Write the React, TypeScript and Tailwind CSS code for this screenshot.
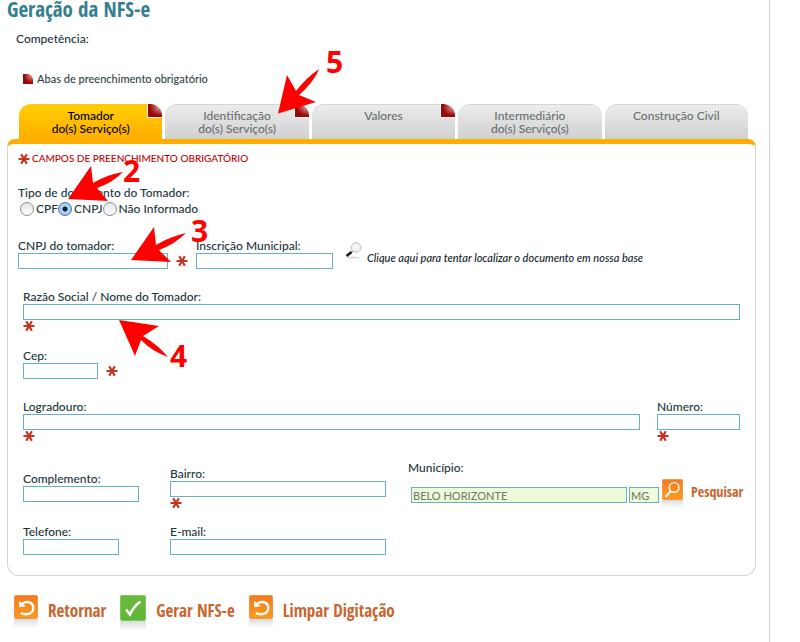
import React from "react";

const tabs = [
  { lines: ["Tomador", "do(s) Serviço(s)"], required: true, active: true },
  { lines: ["Identificação", "do(s) Serviço(s)"], required: true },
  { lines: ["Valores"], required: true },
  { lines: ["Intermediário", "do(s) Serviço(s)"] },
  { lines: ["Construção Civil"] },
];

const condensed = "font-['Open_Sans_Condensed','DejaVu_Sans_Condensed',sans-serif]";

function Asterisk() {
  return (
    <svg viewBox="0 0 12 12" className="block h-3 w-3 shrink-0" aria-hidden="true">
      <path d="M.5 6H11.500M3.200 1.200 8.800 10.800M8.800 1.200 3.200 10.800" stroke="#c5341f" strokeWidth="2.200" fill="none" />
    </svg>
  );
}

type FieldProps = {
  id: string;
  label: string;
  className?: string;
  width?: string;
  mark?: "below" | "side";
};

function Field({ id, label, className = "", width = "w-full", mark }: FieldProps) {
  return (
    <div className={className}>
      <label htmlFor={id} className="block h-[15px] leading-[15px] whitespace-nowrap">
        {label}
      </label>
      <div className="flex items-center gap-2">
        <input id={id} type="text" className={`block h-4 min-w-0 border border-[#64b2bf] bg-white px-px text-[11px] outline-none ${width}`} />
        {mark === "side" && <Asterisk />}
      </div>
      {mark === "below" && <Asterisk />}
    </div>
  );
}

function Radio({ label, checked }: { label: string; checked?: boolean }) {
  return (
    <label className="flex items-center gap-0.5">
      <input
        type="radio"
        name="documento"
        defaultChecked={checked}
        className="h-3.5 w-3.5 appearance-none rounded-full border border-[#8e8e8e] bg-linear-to-b from-[#e4e4e4] to-white checked:border-[#4d6fae] checked:bg-[radial-gradient(circle,#10233f_0_2px,#b4d6f7_3px,#8bbcf0_100%)]"
      />
      {label}
    </label>
  );
}

const tileSizes = {
  back: "h-[33px] w-6",
  check: "h-9 w-[26px]",
  search: "h-[29px] w-[21px]",
};

function IconTile({ kind }: { kind: "back" | "check" | "search" }) {
  const green = kind === "check";
  return (
    <svg viewBox="0 0 26 36" className={`shrink-0 ${tileSizes[kind]}`} aria-hidden="true">
      <defs>
        <linearGradient id={`tile-${kind}`} x1="0" y1="0" x2="0" y2="1">
          <stop offset="0" stopColor={green ? "#6cbb3c" : "#f47b20"} />
          <stop offset="1" stopColor={green ? "#5db637" : "#fb9a1c"} />
        </linearGradient>
        <linearGradient id={`shade-${kind}`} x1="0" y1="0" x2="0" y2="1">
          <stop offset="0" stopColor="#d9dcde" />
          <stop offset="1" stopColor="#ffffff" />
        </linearGradient>
      </defs>
      <rect x="0" y="26" width="26" height="10" fill={`url(#shade-${kind})`} />
      <rect x=".5" y=".5" width="25" height="25" rx="1.5" fill={`url(#tile-${kind})`} stroke={green ? "#7cc95a" : "#f58a3c"} />
      {kind === "back" && (
        <g>
          <path d="M9 9.200C15.500 5.500 21 9 21 14 21 18.500 17.500 21 13 21 10.500 21 8.500 20.500 7.500 19.600" fill="none" stroke="#fff" strokeWidth="2.600" />
          <path d="M5.500 6.300V13.300L13 12.300Z" fill="#fff" />
        </g>
      )}
      {kind === "check" && <path d="M6 14.500 10 19.500C12.500 14 16 9.500 20.500 6.500" fill="none" stroke="#fff" strokeWidth="2.600" />}
      {kind === "search" && (
        <g fill="none" stroke="#fff">
          <circle cx="15" cy="10.500" r="6" strokeWidth="1.800" />
          <path d="M11 15 4.500 22" strokeWidth="2.600" />
        </g>
      )}
    </svg>
  );
}

function ActionButton({ kind, label }: { kind: "back" | "check"; label: string }) {
  return (
    <button type="button" className={`flex items-start gap-2.5 text-[17px] leading-8 font-bold text-[#c9652f] ${condensed}`}>
      <IconTile kind={kind} />
      <span>{label}</span>
    </button>
  );
}

function Annotations() {
  return (
    <svg width="800" height="642" viewBox="0 0 800 642" className="pointer-events-none absolute top-0 left-0" fill="#ff0000" aria-hidden="true">
      <path d="M278 113.500 287 75 296 91Q306 78 319 69 314 82 299 95L316 102Z" />
      <path d="M68 199 91 166 93 183Q106 175 123 172 112 183 97 188L108 201Z" />
      <path d="M131 260 154 227 156 245Q169 237 186 233 175 244 159 250L171 262Z" />
      <path d="M119 320 159 326 143 336Q158 345 168 357 153 352 141 340L135 356Z" />
      <g className="font-['Open_Sans',sans-serif] text-[30px] font-bold">
        <text x="326" y="73">5</text>
        <text x="123" y="182">2</text>
        <text x="191" y="242">3</text>
        <text x="170" y="367">4</text>
      </g>
    </svg>
  );
}

export default function App() {
  return (
    <div className="relative min-h-screen overflow-hidden bg-white pr-[30px] font-[Lato,sans-serif] text-xs font-medium text-[#1d3640]">
      <main className="min-h-screen border-r border-[#cbd3d7] pr-[13px] pl-[7px]">
        <h1 className={`h-6 text-[21px] leading-[18px] font-bold text-[#347f8f] ${condensed}`}>Geração da NFS-e</h1>
        <p className="mt-[7px] ml-[9px] h-4 leading-4">Competência:</p>
        <p className="mt-6 ml-4 flex h-4 items-center gap-1 text-[11px] text-[#333f45]">
          <span className="h-2.5 w-2.5 rounded-tr-md bg-radial-[at_80%_20%] from-[#d98080] to-[#990808] to-60%" />
          Abas de preenchimento obrigatório
        </p>

        <div role="tablist" className="mt-[17px] grid grid-cols-5 gap-[3px] pr-2 pl-3">
          {tabs.map((t) => (
            <button
              key={t.lines.join(" ")}
              type="button"
              role="tab"
              aria-selected={!!t.active}
              className={`relative flex h-[35px] flex-col items-center rounded-t-xl border-t pt-1 leading-[13px] ${
                t.active
                  ? "border-[#ffc21a] bg-linear-to-b from-[#ffce00] to-[#ffae00] text-black"
                  : "border-[#d6d6d6] bg-linear-to-b from-[#ececec] to-[#d0d0d0] text-[#68716f]"
              }`}
            >
              {t.lines.map((l) => (
                <span key={l}>{l}</span>
              ))}
              {t.required && (
                <span className="absolute -top-px right-0 h-3.5 w-[15px] rounded-tr-xl border-b border-l border-white bg-radial-[at_85%_25%] from-[#e09a9a] to-[#990808] to-60%" />
              )}
            </button>
          ))}
        </div>

        <form className="rounded-t-lg rounded-b-xl border border-t-[5px] border-[#d5d5d5] border-t-[#ffae00] pt-[7px] pr-[15px] pb-5 pl-2.5">
          <p className="flex h-4 items-center gap-0.5 text-[10px] text-[#c40000]">
            <Asterisk />
            CAMPOS DE PREENCHIMENTO OBRIGATÓRIO
          </p>

          <fieldset className="mt-[18px]">
            <legend className="h-4 leading-4">Tipo de documento do Tomador:</legend>
            <div className="ml-0.5 flex h-4 items-center">
              <Radio label="CPF" />
              <Radio label="CNPJ" checked />
              <Radio label="Não Informado" />
            </div>
          </fieldset>

          <div className="mt-[21px] flex">
            <Field id="cnpj" label="CNPJ do tomador:" width="w-[150px]" mark="side" className="w-[178px]" />
            <Field id="inscricao" label="Inscrição Municipal:" width="w-[137px]" className="w-[149px]" />
            <a href="#localizar" className="flex items-start text-[11px] leading-4 text-[#15252c] italic">
              <svg viewBox="0 0 18 18" className="mt-1 mr-1 h-[18px] w-[18px]" aria-hidden="true">
                <ellipse cx="8" cy="15.500" rx="7" ry="1" fill="#d8d8d8" />
                <circle cx="11" cy="5.500" r="4.800" fill="#f2f2f2" stroke="#c0c0c0" />
                <path d="M7.800 9 6 10.500" stroke="#999999" strokeWidth="1.500" />
                <path d="M6.500 10 1.500 14" stroke="#222222" strokeWidth="2.800" />
              </svg>
              <span className="mt-3">Clique aqui para tentar localizar o documento em nossa base</span>
            </a>
          </div>

          <div className="mt-5 pl-[5px]">
            <Field id="razao" label="Razão Social / Nome do Tomador:" mark="below" />
            <Field id="cep" label="Cep:" width="w-[75px]" mark="side" className="mt-4" />
            <div className="mt-5 flex gap-[17px]">
              <Field id="logradouro" label="Logradouro:" mark="below" className="flex-1" />
              <Field id="numero" label="Número:" mark="below" className="w-[83px]" />
            </div>
            <div className="mt-[18px] grid grid-cols-[147px_238px_1fr]">
              <Field id="complemento" label="Complemento:" width="w-[116px]" className="mt-[11px]" />
              <Field id="bairro" label="Bairro:" width="w-[216px]" mark="below" className="mt-1.5" />
              <div>
                <label htmlFor="municipio" className="block h-[15px] leading-[15px]">
                  Município:
                </label>
                <div className="mt-1 flex items-start pl-[3px]">
                  <input id="municipio" defaultValue="BELO HORIZONTE" className="mt-2 h-4 w-[216px] min-w-0 border border-[#64b2bf] bg-[#effbd8] px-px text-[11px] text-[#757b72] outline-none" />
                  <input aria-label="UF" defaultValue="MG" className="mt-2 ml-0.5 h-4 w-[30px] border border-[#64b2bf] bg-[#effbd8] px-px text-[11px] text-[#757b72] outline-none" />
                  <button type="button" className={`ml-[3px] flex items-start gap-2 text-sm leading-[26px] font-bold text-[#c9652f] ${condensed}`}>
                    <IconTile kind="search" />
                    Pesquisar
                  </button>
                </div>
              </div>
            </div>
            <div className="mt-[15px] grid grid-cols-[147px_238px_1fr]">
              <Field id="telefone" label="Telefone:" width="w-[96px]" />
              <Field id="email" label="E-mail:" width="w-[216px]" />
            </div>
          </div>
        </form>

        <div className="mt-[19px] ml-[7px] flex gap-3.5">
          <ActionButton kind="back" label="Retornar" />
          <ActionButton kind="check" label="Gerar NFS-e" />
          <ActionButton kind="back" label="Limpar Digitação" />
        </div>
      </main>
      <Annotations />
    </div>
  );
}
